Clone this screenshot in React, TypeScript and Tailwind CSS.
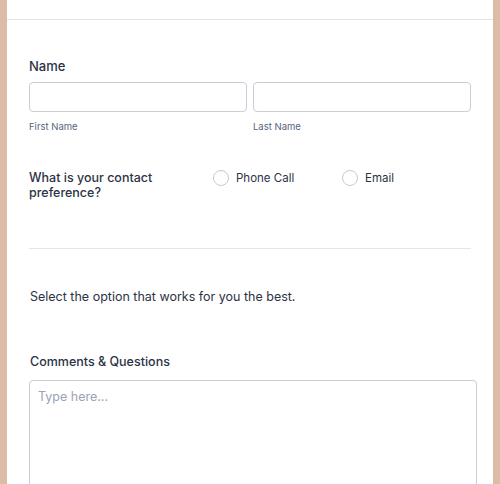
import React from "react";

export default function App() {
  return (
    <div className="w-[500px] h-[484px] overflow-hidden bg-[#dcbca7] px-[7px]" style={{ fontFamily: "Inter, 'Liberation Sans', sans-serif" }}>
      <div className="h-full bg-white">
        <div className="h-[20px] border-b border-[#e3e5ea]" />
        <div className="pl-[22px] pr-[22px]">
          <div className="pt-[36px] text-[13px] leading-[20px] font-medium text-[#2c3345]">Name</div>
          <div className="mt-[6px] flex gap-[6px]">
            <div className="flex-1">
              <div className="h-[30px] rounded-[4px] border border-[#c9cdd8]" />
              <div className="mt-[8px] text-[9.5px] leading-[14px] text-[#57647e]">First Name</div>
            </div>
            <div className="flex-1">
              <div className="h-[30px] rounded-[4px] border border-[#c9cdd8]" />
              <div className="mt-[8px] text-[9.5px] leading-[14px] text-[#57647e]">Last Name</div>
            </div>
          </div>
          <div className="mt-[36px] flex items-start">
            <div className="w-[184px] text-[12.5px] leading-[15px] font-medium text-[#2c3345]">What is your contact preference?</div>
            <div className="w-[129px] flex items-center">
              <span className="w-[16px] h-[16px] rounded-full border border-[#c6cad6]" />
              <span className="ml-[7px] text-[11.5px] leading-[15px] text-[#2c3345]">Phone Call</span>
            </div>
            <div className="flex items-center">
              <span className="w-[16px] h-[16px] rounded-full border border-[#c6cad6]" />
              <span className="ml-[7px] text-[11.5px] leading-[15px] text-[#2c3345]">Email</span>
            </div>
          </div>
          <div className="mt-[48px] border-t border-[#e3e5ea]" />
          <div className="mt-[40px] pl-[1px] text-[12.5px] leading-[16px] text-[#2c3345]">Select the option that works for you the best.</div>
          <div className="mt-[49px] pl-[1px] text-[12.5px] leading-[16px] font-medium text-[#2c3345]">Comments &amp; Questions</div>
          <div className="mt-[10px] w-[448px] h-[120px] rounded-[4px] border border-[#c9cdd8] px-[8px] pt-[8px] text-[12.5px] leading-[16px] text-[#9aa3b5]">Type here...</div>
        </div>
      </div>
    </div>
  );
}
